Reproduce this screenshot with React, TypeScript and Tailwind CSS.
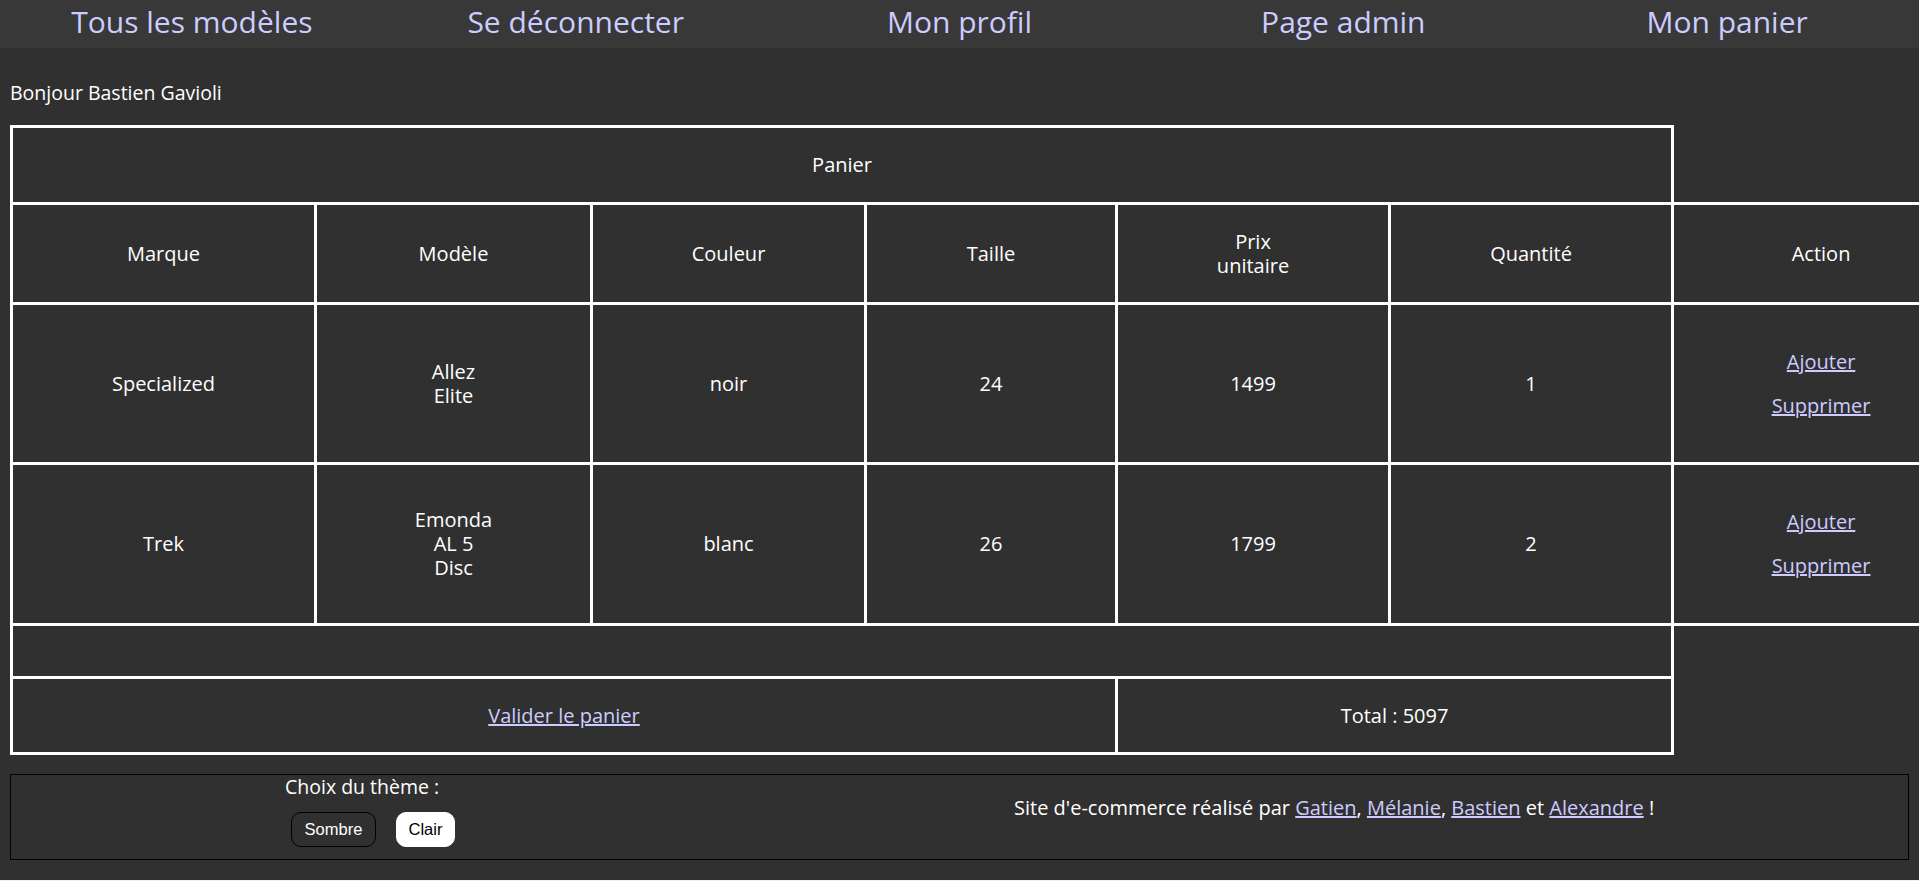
import React from "react";

const navItems = ["Tous les modèles", "Se déconnecter", "Mon profil", "Page admin", "Mon panier"];

const cell = "border-[3px] border-white text-center align-middle p-0";
const link = "text-[#ccccff] underline";

const ActionCell: React.FC = () => (
  <td className={cell}>
    <div className="flex flex-col items-center gap-[20px]">
      <a href="#" className={link}>
        Ajouter
      </a>
      <a href="#" className={link}>
        Supprimer
      </a>
    </div>
  </td>
);

const App: React.FC = () => {
  return (
    <div className="bg-[#f0f0f0] h-[881px] overflow-hidden">
      <div className="h-[880px] overflow-hidden bg-[#303030] text-white font-['Open_Sans',sans-serif]">
        <nav className="flex h-12 bg-[#383838]">
          {navItems.map((item) => (
            <a
              key={item}
              href="#"
              className="flex-1 text-center text-[30px] leading-[44px] text-[#ccccff]"
            >
              {item}
            </a>
          ))}
        </nav>

        <div className="px-[10px]">
          <p className="mt-[33px] text-[19.5px] leading-[24px]">Bonjour Bastien Gavioli</p>

          <table className="mt-[20px] table-fixed border-collapse w-[1958px] text-[20px] leading-[24px]">
            <colgroup>
              <col className="w-[304px]" />
              <col className="w-[276px]" />
              <col className="w-[274px]" />
              <col className="w-[251px]" />
              <col className="w-[273px]" />
              <col className="w-[283px]" />
              <col className="w-[297px]" />
            </colgroup>
            <tbody>
              <tr className="h-[77px]">
                <td colSpan={6} className={cell}>
                  Panier
                </td>
              </tr>
              <tr className="h-[100px]">
                <td className={cell}>Marque</td>
                <td className={cell}>Modèle</td>
                <td className={cell}>Couleur</td>
                <td className={cell}>Taille</td>
                <td className={cell}>
                  Prix
                  <br />
                  unitaire
                </td>
                <td className={cell}>Quantité</td>
                <td className={cell}>Action</td>
              </tr>
              <tr className="h-[160px]">
                <td className={cell}>Specialized</td>
                <td className={cell}>
                  Allez
                  <br />
                  Elite
                </td>
                <td className={cell}>noir</td>
                <td className={cell}>24</td>
                <td className={cell}>1499</td>
                <td className={cell}>1</td>
                <ActionCell />
              </tr>
              <tr className="h-[161px]">
                <td className={cell}>Trek</td>
                <td className={cell}>
                  Emonda
                  <br />
                  AL 5
                  <br />
                  Disc
                </td>
                <td className={cell}>blanc</td>
                <td className={cell}>26</td>
                <td className={cell}>1799</td>
                <td className={cell}>2</td>
                <ActionCell />
              </tr>
              <tr className="h-[53px]">
                <td colSpan={6} className={cell}></td>
              </tr>
              <tr className="h-[76px]">
                <td colSpan={4} className={cell}>
                  <a href="#" className={link}>
                    Valider le panier
                  </a>
                </td>
                <td colSpan={2} className={cell}>
                  Total : 5097
                </td>
              </tr>
            </tbody>
          </table>

          <footer className="mt-[19px] flex h-[86px] items-start border border-black">
            <div className="ml-[274px] w-[729px]">
              <p className="text-[19.5px] leading-[24px]">Choix du thème :</p>
              <div className="mt-[13px] flex gap-[20px] pl-[6px] font-['Liberation_Sans',sans-serif] text-[16.5px]">
                <button className="h-[35px] w-[85px] rounded-[10px] border border-black text-white">
                  Sombre
                </button>
                <button className="h-[35px] w-[59px] rounded-[10px] border border-white bg-white text-black">
                  Clair
                </button>
              </div>
            </div>
            <p className="mt-[21px] text-[20px] leading-[24px]">
              Site d'e-commerce réalisé par{" "}
              <a href="#" className={link}>
                Gatien
              </a>
              ,{" "}
              <a href="#" className={link}>
                Mélanie
              </a>
              ,{" "}
              <a href="#" className={link}>
                Bastien
              </a>{" "}
              et{" "}
              <a href="#" className={link}>
                Alexandre
              </a>{" "}
              !
            </p>
          </footer>
        </div>
      </div>
    </div>
  );
};

export default App;
